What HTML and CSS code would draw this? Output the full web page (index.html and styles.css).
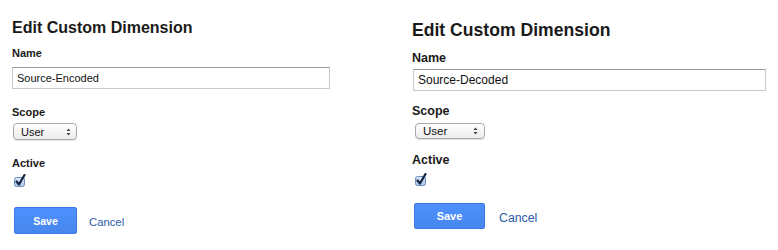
FILE: index.html
```html
<!DOCTYPE html>
<html>
<head>
<meta charset="utf-8">
<link rel="stylesheet" href="styles.css">
</head>
<body>
<div class="page">
  <section class="panel panel-a">
    <h1 class="title">Edit Custom Dimension</h1>
    <div class="label label-name">Name</div>
    <div class="input">Source-Encoded</div>
    <div class="label label-scope">Scope</div>
    <div class="select"><span>User</span>
      <svg class="arrows" width="5" height="8" viewBox="0 0 5 8"><path d="M2.5 0.5 L4.5 3 L0.5 3 Z M0.5 5 L4.5 5 L2.5 7.5 Z" fill="#444"/></svg>
    </div>
    <div class="label label-active">Active</div>
    <svg class="check" width="13" height="13" viewBox="0 0 13 13">
      <defs><linearGradient id="cbA" x1="0" y1="0" x2="0" y2="1"><stop offset="0" stop-color="#dbe8f8"/><stop offset="1" stop-color="#a9c6ea"/></linearGradient></defs>
      <rect x="1.5" y="3.5" width="10" height="9" rx="2" fill="url(#cbA)" stroke="#6d8fbf"/>
      <path d="M3.5 7.5 L6 10.5 L11.5 1" fill="none" stroke="#14233f" stroke-width="2.2" stroke-linecap="round" stroke-linejoin="round"/>
    </svg>
    <div class="actions">
      <button class="save">Save</button>
      <a class="cancel">Cancel</a>
    </div>
  </section>
  <section class="panel panel-b">
    <h1 class="title">Edit Custom Dimension</h1>
    <div class="label label-name">Name</div>
    <div class="input">Source-Decoded</div>
    <div class="label label-scope">Scope</div>
    <div class="select"><span>User</span>
      <svg class="arrows" width="5" height="8" viewBox="0 0 5 8"><path d="M2.5 0.5 L4.5 3 L0.5 3 Z M0.5 5 L4.5 5 L2.5 7.5 Z" fill="#444"/></svg>
    </div>
    <div class="label label-active">Active</div>
    <svg class="check" width="13" height="13" viewBox="0 0 13 13">
      <defs><linearGradient id="cbB" x1="0" y1="0" x2="0" y2="1"><stop offset="0" stop-color="#dbe8f8"/><stop offset="1" stop-color="#a9c6ea"/></linearGradient></defs>
      <rect x="1.5" y="3.5" width="10" height="9" rx="2" fill="url(#cbB)" stroke="#6d8fbf"/>
      <path d="M3.5 7.5 L6 10.5 L11.5 1" fill="none" stroke="#14233f" stroke-width="2.2" stroke-linecap="round" stroke-linejoin="round"/>
    </svg>
    <div class="actions">
      <button class="save">Save</button>
      <a class="cancel">Cancel</a>
    </div>
  </section>
</div>
</body>
</html>
```
FILE: styles.css
```css
* { box-sizing: border-box; }
html, body { margin: 0; padding: 0; background: #fff; }
body { font-family: "Liberation Sans", Arial, sans-serif; color: #1a1a1a; }

.page { display: flex; width: 778px; height: 250px; }

.panel { display: flex; flex-direction: column; align-items: flex-start; padding-left: 12px; }
.panel-a { width: 400px; padding-top: 18px; }
.panel-b { flex: 1; padding-top: 19px; }

.title { margin: 0; font-weight: bold; color: #1a1a1a; }
.panel-a .title { font-size: 16px; line-height: 20px; }
.panel-b .title { font-size: 17.6px; line-height: 22px; }

.label { font-weight: bold; color: #1a1a1a; }
.panel-a .label { font-size: 11px; line-height: 14px; }
.panel-b .label { font-size: 12.5px; line-height: 15px; }

.panel-a .label-name { margin-top: 8px; }
.panel-b .label-name { margin-top: 10px; }

.input {
  border: 1px solid #c9c9c9;
  border-top-color: #9a9a9a;
  background: #fff;
  display: flex; align-items: center;
  color: #111;
}
.panel-a .input { margin-top: 7px; width: 318px; height: 22px; padding-left: 4px; font-size: 11px; }
.panel-b .input { margin-top: 3px; margin-left: 1px; width: 353px; height: 22px; padding-left: 4px; font-size: 12px; }

.panel-a .label-scope { margin-top: 16px; }
.panel-b .label-scope { margin-top: 13px; }

.select {
  display: flex; align-items: center; justify-content: space-between;
  border: 1px solid #a8a8a8;
  border-radius: 4px;
  background: linear-gradient(#ffffff, #ececec);
  box-shadow: 0 1px 1px rgba(0,0,0,0.12);
  color: #111;
}
.panel-a .select { margin-top: 4px; margin-left: 1px; width: 64px; height: 17px; padding: 0 5px 0 7px; font-size: 11px; }
.panel-b .select { margin-top: 4px; margin-left: 3px; width: 70px; height: 16px; padding: 0 6px 0 7px; font-size: 11.5px; }

.panel-a .label-active { margin-top: 16px; }
.panel-b .label-active { margin-top: 14px; }

.check { display: block; }
.panel-a .check { margin-top: 4px; margin-left: 1px; }
.panel-b .check { margin-top: 5px; margin-left: 2px; }

.actions { display: flex; align-items: center; }
.panel-a .actions { margin-top: 20px; margin-left: 2px; gap: 12px; }
.panel-b .actions { margin-top: 17px; margin-left: 2px; gap: 14px; }

.save {
  font-family: "Liberation Sans", Arial, sans-serif;
  font-weight: bold;
  color: #fff;
  background: linear-gradient(#4d90fe, #4787ed);
  border: 1px solid #3b7ae8;
  border-radius: 2px;
  padding: 0;
  cursor: pointer;
}
.panel-a .save { width: 63px; height: 27px; font-size: 10.5px; }
.panel-b .save { width: 71px; height: 26px; font-size: 11px; }

.cancel { color: #2a5aa8; text-decoration: none; }
.panel-a .cancel { font-size: 11.3px; padding-top: 3px; }
.panel-b .cancel { font-size: 12.3px; padding-top: 3px; }
```
